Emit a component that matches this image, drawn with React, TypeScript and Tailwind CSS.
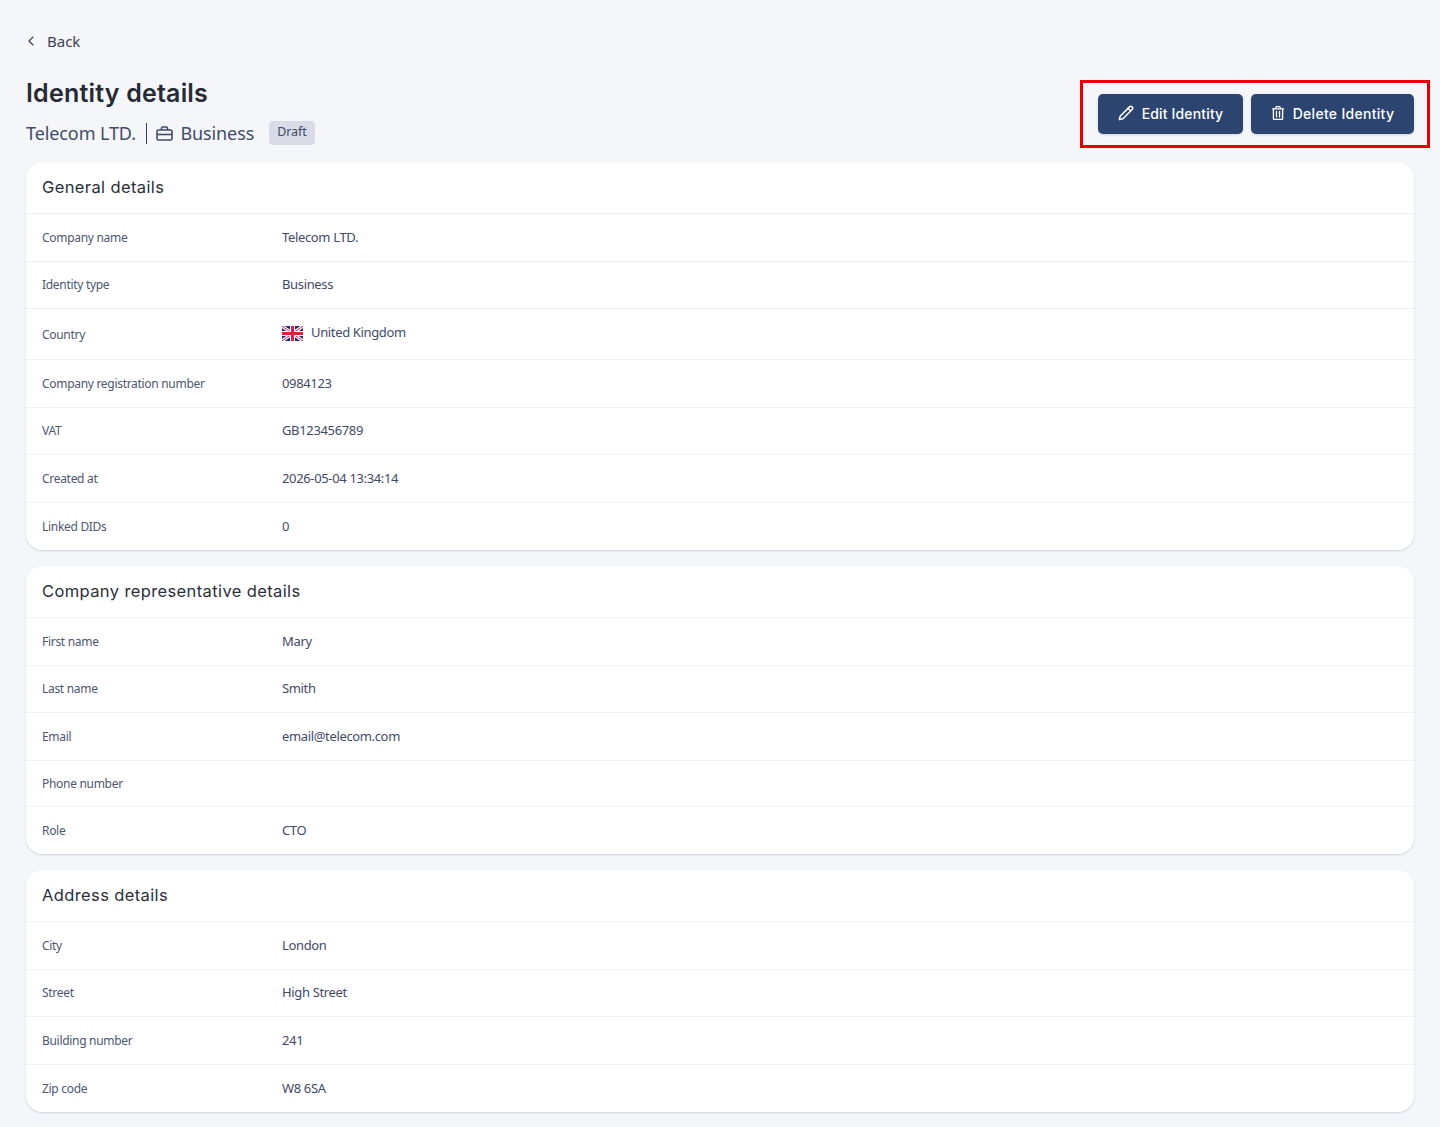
import { ChevronLeft, Pencil } from "lucide-react";
import { FaRegTrashAlt } from "react-icons/fa";
import type { ReactNode } from "react";

type Row = { label: string; value?: ReactNode; tall?: boolean; short?: boolean };

function UkFlag() {
  return (
    <svg width="21" height="15" viewBox="0 0 21 15" className="shrink-0">
      <rect width="21" height="15" fill="#1f2a78" />
      <path d="M0 0 21 15M21 0 0 15" stroke="#fff" strokeWidth="3.2" />
      <path d="M0 0 21 15M21 0 0 15" stroke="#d8243c" strokeWidth="1" />
      <path d="M10.5 0v15M0 7.5h21" stroke="#fff" strokeWidth="5" />
      <path d="M10.5 0v15M0 7.5h21" stroke="#d8243c" strokeWidth="3" />
    </svg>
  );
}

function Briefcase() {
  return (
    <svg width="17" height="15" viewBox="0 0 17 15" fill="none" stroke="currentColor" strokeWidth="1.6" className="shrink-0">
      <rect x="1" y="4" width="15" height="10" rx="1.5" />
      <path d="M5.5 4V2.2A1.2 1.2 0 0 1 6.7 1h3.6a1.2 1.2 0 0 1 1.2 1.2V4" />
      <path d="M1 8.5h15" />
    </svg>
  );
}

const general: Row[] = [
  { label: "Company name", value: "Telecom LTD." },
  { label: "Identity type", value: "Business" },
  {
    label: "Country",
    tall: true,
    value: (
      <span className="-mt-[2px] flex items-center gap-2">
        <UkFlag />
        United Kingdom
      </span>
    ),
  },
  { label: "Company registration number", value: "0984123" },
  { label: "VAT", value: "GB123456789" },
  { label: "Created at", value: "2026-05-04 13:34:14" },
  { label: "Linked DIDs", value: "0" },
];

const representative: Row[] = [
  { label: "First name", value: "Mary" },
  { label: "Last name", value: "Smith" },
  { label: "Email", value: "email@telecom.com" },
  { label: "Phone number", short: true },
  { label: "Role", value: "CTO" },
];

const address: Row[] = [
  { label: "City", value: "London" },
  { label: "Street", value: "High Street" },
  { label: "Building number", value: "241" },
  { label: "Zip code", value: "W8 6SA" },
];

function Section({ title, rows }: { title: string; rows: Row[] }) {
  return (
    <section className="rounded-2xl bg-white shadow-[0_1px_2px_rgba(40,50,90,0.18)]">
      <h2 className="flex h-[52px] items-center border-b border-[#f0f1f4] px-4 font-['Inter',sans-serif] text-[16.5px] tracking-[0.38px] text-[#2b2f3a]">
        {title}
      </h2>
      {rows.map((row, i) => (
        <div
          key={row.label}
          className={`flex items-center px-4 text-[13px] tracking-[-0.35px] ${
            row.tall ? "h-[51px]" : row.short ? "h-[46px]" : "h-[47.5px]"
          } ${i < rows.length - 1 ? "border-b border-[#f0f1f4]" : ""}`}
        >
          <div className="mt-px w-[240px] text-[12px] tracking-[-0.3px] text-[#4d5770]">{row.label}</div>
          <div className="text-[#3f4a68]">{row.value}</div>
        </div>
      ))}
    </section>
  );
}

export default function App() {
  return (
    <div className="relative min-h-[1127px] bg-[#f5f6fa] px-[26px] pt-[31px] pb-[15px] font-['Noto_Sans',sans-serif]">
      <button className="-ml-[3px] flex h-5 items-center gap-2 text-[15px] text-[#3a4256]">
        <ChevronLeft size={16} strokeWidth={1.75} />
        Back
      </button>

      <div className="mt-[24px] flex items-end justify-between">
        <div>
          <h1 className="font-['Inter',sans-serif] text-[25px] leading-[36px] font-semibold tracking-[0.2px] text-[#262b36]">
            Identity details
          </h1>
          <div className="mt-[9px] flex h-[27px] items-center text-[18px] tracking-[-0.1px] text-[#414c6b]">
            Telecom LTD.
            <span className="mr-[9px] ml-[10px] h-[21px] w-[1.5px] bg-[#2c4570]" />
            <Briefcase />
            <span className="ml-[7px]">Business</span>
            <span className="mb-[2px] ml-[15px] flex h-6 items-center rounded bg-[#d9dce6] px-2 text-[12.5px] text-[#3f4a68]">
              Draft
            </span>
          </div>
        </div>
        <div className="mb-[13px] flex gap-2">
          <button className="flex h-10 w-[145px] items-center justify-center gap-2 rounded-[5px] bg-[#2c4570] pb-[2px] font-['Inter',sans-serif] text-[14px] font-medium tracking-[0.15px] text-white shadow-sm">
            <Pencil size={16} strokeWidth={2.25} />
            Edit Identity
          </button>
          <button className="flex h-10 w-[163px] items-center justify-center gap-2 rounded-[5px] bg-[#2c4570] pb-[2px] font-['Inter',sans-serif] text-[14px] font-medium tracking-[0.3px] text-white shadow-sm">
            <FaRegTrashAlt size={14} />
            Delete Identity
          </button>
        </div>
      </div>

      <div className="mt-[15px] flex flex-col gap-4">
        <Section title="General details" rows={general} />
        <Section title="Company representative details" rows={representative} />
        <Section title="Address details" rows={address} />
      </div>

      <div className="pointer-events-none absolute top-[80px] left-[1080px] h-[68px] w-[350px] border-[3px] border-[#e60000]" />
    </div>
  );
}
